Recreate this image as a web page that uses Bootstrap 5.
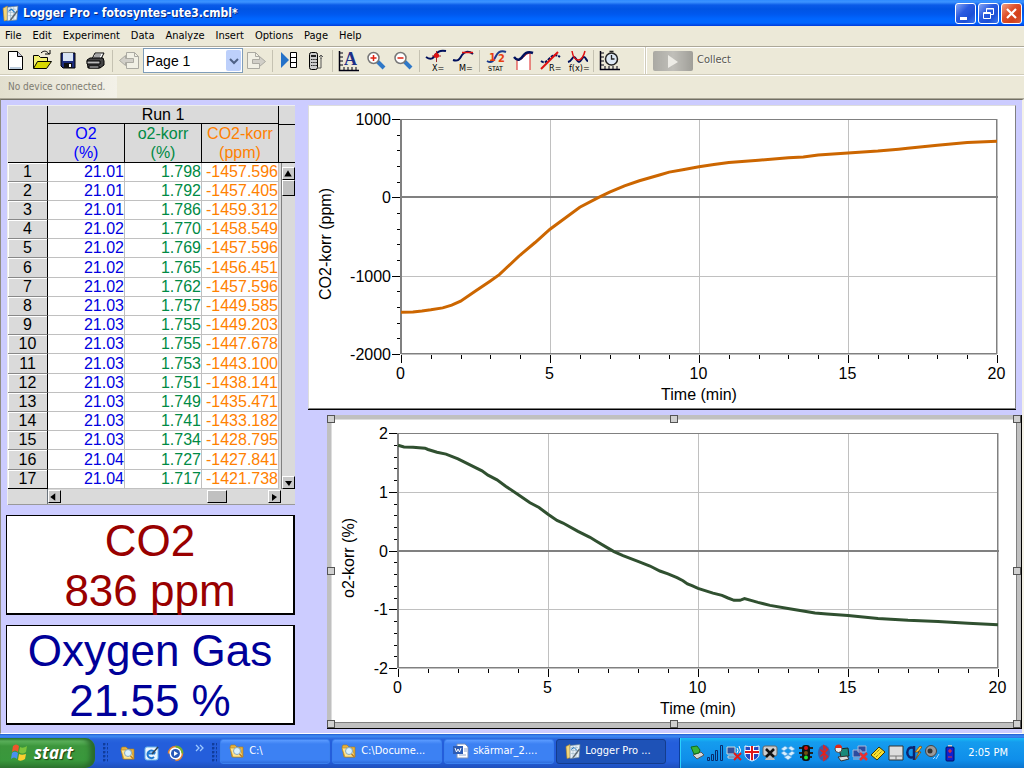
<!DOCTYPE html>
<html lang="en">
<head>
<meta charset="utf-8">
<meta name="viewport" content="width=device-width, initial-scale=1">
<title>Logger Pro - fotosyntes-ute3.cmbl*</title>
<link rel="stylesheet" href="https://cdn.jsdelivr.net/npm/bootstrap@5.3.0/dist/css/bootstrap.min.css">
<style>
  :root { --face: #ece9d8; --ui: "DejaVu Sans Condensed", "DejaVu Sans", sans-serif; --plot: "Liberation Sans", Arial, sans-serif; }
  body { font: 11px/14px var(--ui); color: #000; background: var(--face); }
  svg { display: block; flex: none; }
  button { font-family: inherit; }

  .titlebar { height: 26px; padding: 0 2px 0 2px; color: #fff; text-shadow: 1px 1px #0a2a7c;
    background: linear-gradient(#2f8bff 0, #3c93ff 2px, #0a5be8 5px, #0054e3 9px, #0058ee 14px, #0066ff 19px, #0066ff 23px, #003bda 26px); }
  .titlebar h1 { font: bold 12px/16px var(--ui); }
  .winbtn { width: 21px; height: 21px; border: 1px solid #fff; border-radius: 3px; background: linear-gradient(135deg, #86a6f5, #2a5be0 40%, #1c4fd6 70%, #3a77f0); }
  .winbtn.shut { background: linear-gradient(135deg, #f0a084, #e0512c 40%, #d2401a 70%, #d85c3c); }

  .menubar { height: 20px; gap: 11px; padding: 0 5px; }
  .menubar a { color: #000; text-decoration: none; }
  .toolband { height: 29px; padding-left: 2px; border-top: 1px solid #aca899; border-bottom: 1px solid #d0ccba; box-shadow: inset 0 1px #fff; }
  .tool { width: 27px; height: 27px; }
  .tool.off { opacity: .55; }
  .rule { width: 6px; height: 22px; border: 0; opacity: 1; margin: 0; background: linear-gradient(90deg, transparent 2px, #c5c2b2 2px, #c5c2b2 3px, transparent 3px); }
  .pagebox { position: relative; width: 100px; height: 25px; border: 1px solid #7f9db9; background: #fff; }
  .pagebox select { appearance: none; width: 100%; height: 23px; border: 0; padding: 0 18px 0 2px; background: transparent; font: 14px/22px var(--plot); color: #000; }
  .pagebox svg { position: absolute; right: 1px; top: 1px; pointer-events: none; }
  .toolend { width: 21px; border-right: 1px solid #fff; box-shadow: 1px 0 #d0ccba, 2px 0 #fff; }
  .collect { height: 27px; padding: 0 0 0 8px; gap: 4px; color: #a5a293; text-shadow: 1px 1px #fff; font-size: 11px; }
  .device { height: 24px; border-top: 1px solid #fff; border-bottom: 1px solid #aca899; color: #7d7b70; }
  .device output { width: 117px; padding-left: 8px; background: linear-gradient(90deg, #e2dfce, #f3f1e8); line-height: 22px; font-size: 10px; }

  .workspace { gap: 13px; padding: 5px 0 4px 5px; background: #ccf; border: 1px solid #908e84; border-top-color: #716f64; border-bottom-color: #fff; border-right: 2px solid #f4f2e8; }
  .leftcol { width: 289px; gap: 10px; font-family: var(--plot); }
  .grid { width: 288px; margin-left: 1px; background: #dadada; border-top: 1px solid #eee; border-left: 1px solid #eee; }
  .runs { width: 271px; table-layout: fixed; border-collapse: separate; border-spacing: 0; font-size: 16px; line-height: 18px; color: #000; }
  .runs th { font-weight: 400; text-align: center; padding: 0; border-bottom: 1px solid #000; border-right: 1px solid #000; white-space: nowrap; }
  .runs tr.names th { height: 38px; line-height: 19px; }
  .runs tr.run th { height: 18px; line-height: 17px; }
  .runs tbody tr { height: 19px; }
  .runs tbody tr:nth-child(5n+6) { height: 20px; }
  .runs tbody th { border-bottom: 1px solid #888; box-shadow: inset 1px 1px #fff; background: #dadada; }
  .runs tbody td { background: #fff; border-right: 1px solid #c0c0c0; border-bottom: 1px solid #c0c0c0; text-align: right; padding: 0; }
  .runs tbody tr:last-child th { border-bottom-color: #000; }
  .c-o2 { color: #00f; } .runs tbody td.c-o2 { color: #0000e0; }
  .c-o2k { color: #008a45; }
  .c-co2 { color: #ff8000; }
  .sidehead { height: 19px; border-bottom: 1px solid #000; }
  .sidehead + .sidehead { height: 38px; }
  .arrow { width: 13px; height: 13px; padding: 0; border: 1px solid #000; border-top-color: #fff; border-left-color: #fff; background: #c8c8c8; }
  .thumb { border: 1px solid #000; border-top-color: #fff; border-left-color: #fff; background: #c0c0c0; }
  .vbar { width: 14px; border-left: 1px solid #808080; }
  .hbar { height: 16px; border-bottom: 1px solid #999; }
  .meter { height: 100px; border: 1px solid #000; border-right-width: 2px; border-bottom-width: 2px; background: #fff; font-size: 44px; line-height: 50px; text-align: center; white-space: nowrap; }
  .meter.co2 { color: #900; } .meter.o2 { color: #009; }
  .rightcol { min-width: 0; gap: 5px; }
  .graph { background: #fff; }
  .graph svg { width: 100%; height: auto; font: 16px var(--plot); }
  .graph.plain { margin-right: 6px; border: 1px solid #ddd; border-right-color: #808080; border-bottom-color: #808080; box-shadow: 0 1px #000; }
  .picked { position: relative; margin: 1px 0 0 19px; padding: 4px 4px 5px; background: silver; border-right: 1px solid #000; border-bottom: 1px solid #000; }
  .picked .graph { border: 1px solid #ddd; border-right-color: #808080; border-bottom-color: #808080; }
  .grip { position: absolute; width: 8px; height: 8px; border: 1px solid #555; background: #d0d0d0; }
  .g-mx { left: calc(50% - 4px); } .g-my { top: calc(50% - 5px); }

  .taskbar { height: 34px; padding-top: 4px; color: #fff; background: linear-gradient(#1f5ad0 0, #3f8cf3 2px, #2a66de 5px, #245edb 9px, #245edb 27px, #1e4fbc 34px); }
  .start { width: 97px; border: 0; border-radius: 0 10px 10px 0; padding: 0 0 1px 10px; gap: 5px; color: #fff; font: italic bold 17px/20px "Open Sans", sans-serif; text-shadow: 1px 1px 1px #1c3d10;
    background: linear-gradient(#2c7f2c 0, #5eb45e 3px, #3c963c 8px, #39983c 22px, #2f7a31 30px); box-shadow: inset -5px 0 5px #2a6a2c; }
  .dots { width: 5px; height: 20px; background: radial-gradient(circle at 1px 1px, #103c9c 1px, transparent 2px) 0 0 / 4px 4px; }
  .quick { gap: 7px; padding: 0 4px 0 12px; }
  .tasks { gap: 2px; padding-left: 3px; }
  .task { width: 110px; height: 25px; border: 1px solid #3a80ee; border-radius: 3px; gap: 4px; padding: 0 8px; color: #fff; text-align: left; background: linear-gradient(#5a9bff, #3c81f3 4px, #3c81f3 20px, #2f6cdc); white-space: nowrap; }
  .task.on { background: #1e52b7; border-color: #143c8c; }
  .tray { margin-left: 13px; padding: 0 16px 0 9px; gap: 2px; border-left: 1px solid #0b3f9c; background: linear-gradient(#18bdf5 0, #159cee 4px, #0f8eea 22px, #0c75cf 30px); box-shadow: inset 1px 0 #2bd0fb; }
  .tray time { padding-left: 8px; }
</style>
</head>
<body class="d-flex flex-column min-vh-100">

<svg width="0" height="0" class="position-absolute" aria-hidden="true">
  <defs>
    <symbol id="i-logger" viewBox="0 0 16 16"><path d="M1 3l4-2 1 13-4 1z" fill="#f4d67a" stroke="#b98a20" stroke-width=".6"/><path d="M5 2l10-1-1 13-9 1z" fill="#e8f1f8" stroke="#6a8294" stroke-width=".7"/><path d="M6 4h7M6 7h7M6 10h7M8 2v12M11 2v12" stroke="#9ab6c8" stroke-width=".6"/><path d="M6 6l3-2 3 3" fill="none" stroke="#2277c0"/><path d="M14 5l-6 8-1 2 2-1 6-8z" fill="#5c6870"/></symbol>
    <symbol id="i-folder" viewBox="0 0 16 16"><path d="M1 4l1-2h4l2 2h6v10H3z" fill="#e8b23e" stroke="#a87818" stroke-width=".6"/><path d="M1 5h10l3 9H4z" fill="#ffe58e" stroke="#b98820" stroke-width=".6"/><circle cx="8" cy="8" r="3.500" fill="#d8f2ff" stroke="#8aa8b8"/><path d="M10.500 11l3 3" stroke="#c08020" stroke-width="1.600"/></symbol>
    <symbol id="i-tl" viewBox="0 0 8 8"><path d="M1 4l4-3v6z"/></symbol>
    <symbol id="i-up" viewBox="0 0 8 8"><path d="M4 1l3 5H1z"/></symbol>
  </defs>
</svg>

<header class="titlebar d-flex align-items-center">
  <svg width="17" height="19"><use href="#i-logger"/></svg>
  <h1 class="m-0 ms-1 me-auto">Logger Pro - fotosyntes-ute3.cmbl*</h1>
  <div class="d-flex" style="gap:2px">
    <button class="winbtn p-0" aria-label="Minimize"><svg width="19" height="19"><path d="M4 13h7v3H4z" fill="#fff"/></svg></button>
    <button class="winbtn p-0" aria-label="Restore"><svg width="19" height="19" fill="none" stroke="#fff"><path d="M7.500 8V4.500h7v6H12M7 5h8M4.500 8.500h7v6h-7zM4 9.500h8"/></svg></button>
    <button class="winbtn shut p-0" aria-label="Close"><svg width="19" height="19"><path d="M5 5l9 9M14 5l-9 9" stroke="#fff" stroke-width="2.200"/></svg></button>
  </div>
</header>

<nav class="menubar d-flex align-items-center" aria-label="Menu">
  <a href="#">File</a><a href="#">Edit</a><a href="#">Experiment</a><a href="#">Data</a><a href="#">Analyze</a><a href="#">Insert</a><a href="#">Options</a><a href="#">Page</a><a href="#">Help</a>
</nav>

<div class="toolband d-flex align-items-center" role="toolbar">
  <button class="tool btn p-0 border-0 rounded-0 ms-0" aria-label="New"><svg width="27" height="27"><path d="M6.500 4.500h9l5 5v13h-14z" fill="#fff" stroke="#000"/><path d="M15.500 4.500v5h5" fill="#ccd" stroke="#000"/><path d="M8 21h11" stroke="#bcd" stroke-width="2"/></svg></button>
  <button class="tool btn p-0 border-0 rounded-0" aria-label="Open"><svg width="27" height="27"><path d="M4.500 21V8.500h5l2 2h7v4" fill="#f3f070" stroke="#000"/><path d="M4.500 21.500l4-7h14l-5 7z" fill="#d8d800" stroke="#000"/><path d="M12 6c3-3 6-2 8 1m-4 0h5V3" fill="none" stroke="#000"/></svg></button>
  <button class="tool btn p-0 border-0 rounded-0" aria-label="Save"><svg width="27" height="27"><path d="M5 6h14v15H7l-2-2z" fill="#1c2c7c" stroke="#000"/><path d="M7 6h10v8H7z" fill="#d8e4f4"/><path d="M8 16h8v5H8z" fill="#111"/><path d="M13 17h2v3h-2z" fill="#fff"/></svg></button>
  <button class="tool btn p-0 border-0 rounded-0" aria-label="Print"><svg width="27" height="27" stroke="#000"><path d="M9 12l3-6h9l-3 6z" fill="#fff"/><path d="M12 8h6M11 10h6" stroke-width=".7"/><path d="M4 13l3-2h13l1 3v4l-4 3H5z" fill="#444"/><path d="M4 14h13v3H4z" fill="#bbb"/><path d="M6 19h10v2H6z" fill="#eee"/></svg></button>
  <hr class="rule">
  <button class="tool off btn p-0 border-0 rounded-0" aria-label="Previous page"><svg width="27" height="27" stroke="#777"><path d="M10.500 5.500h8l4 4v12h-12z" fill="#f6f6f0"/><path d="M18.500 5.500v4h4" fill="none"/><path d="M3.500 13.500l6-5v3h8v4h-8v3z" fill="#bbb"/></svg></button>
  <label class="pagebox"><select aria-label="Page"><option>Page 1</option></select>
    <svg width="15" height="21"><rect width="15" height="21" rx="2" fill="#bdd0fb"/><path d="M4 9l4 4 4-4" fill="none" stroke="#4d6185" stroke-width="2"/></svg></label>
  <button class="tool off btn p-0 border-0 rounded-0" aria-label="Next page"><svg width="27" height="27" stroke="#777"><path d="M4.500 5.500h8l4 4v12h-12z" fill="#f6f6f0"/><path d="M12.500 5.500v4h4" fill="none"/><path d="M22.500 14.500l-6-5v3h-7v4h7v3z" fill="#bbb"/></svg></button>
  <hr class="rule">
  <button class="tool btn p-0 border-0 rounded-0" aria-label="Data browser"><svg width="27" height="27"><path d="M5 5l8 8-8 8z" fill="#2472c8"/><path d="M14.500 5.500h6v15h-6zM14.500 10.500h6M14.500 15.500h6" fill="#fff" stroke="#000"/></svg></button>
  <button class="tool btn p-0 border-0 rounded-0" aria-label="LabPro"><svg width="27" height="27"><rect x="6.500" y="5.500" width="8" height="17" rx="2" fill="#ccc" stroke="#000"/><path d="M8 8h5v2H8z" fill="#222"/><path d="M8 12.500h6M8 15.500h6M8 18.500h6" stroke="#222" stroke-dasharray="1.500 .7"/><path d="M15 21h3V11m0 1v-4m-2 2l2-2 2 2" fill="none" stroke="#555"/></svg></button>
  <hr class="rule">
  <button class="tool btn p-0 border-0 rounded-0" aria-label="Autoscale"><svg width="27" height="27"><path d="M3.500 4v19.500H23" fill="none" stroke="#001" stroke-width="1.500"/><path d="M4 6h3M4 10h3M4 14h3M4 18h3M8 23v-3M12 23v-3M16 23v-3M20 23v-3" stroke="#001"/><text x="8" y="18" font-family="Liberation Serif, serif" font-weight="700" font-size="18" fill="#1c2f86">A</text></svg></button>
  <button class="tool btn p-0 border-0 rounded-0" aria-label="Zoom in"><svg width="27" height="27"><path d="M14 14l7 7" stroke="#2f78c8" stroke-width="4"/><circle cx="10.500" cy="11" r="5.500" fill="#fff" stroke="#777" stroke-width="1.500"/><path d="M7.500 11h6M10.500 8v6" stroke="#e02010" stroke-width="1.500"/></svg></button>
  <button class="tool btn p-0 border-0 rounded-0" aria-label="Zoom out"><svg width="27" height="27"><path d="M14 14l7 7" stroke="#2f78c8" stroke-width="4"/><circle cx="10.500" cy="11" r="5.500" fill="#fff" stroke="#777" stroke-width="1.500"/><path d="M7.500 11h6" stroke="#e02010" stroke-width="1.500"/></svg></button>
  <hr class="rule">
  <button class="tool btn p-0 border-0 rounded-0" aria-label="Examine"><svg width="27" height="27" fill="none"><path d="M3 10c6 4 8 0 10-3s5-4 10-3" stroke="#00105c" stroke-width="2"/><path d="M13.500 4v11M9 9h9" stroke="#a02828"/><circle cx="13.500" cy="8.500" r="2.500" fill="#e01010"/><text x="9" y="24" font-size="9" fill="#000">X=</text></svg></button>
  <button class="tool btn p-0 border-0 rounded-0" aria-label="Tangent"><svg width="27" height="27" fill="none"><path d="M3 13c6 2 7-2 9-5s6-5 11-1" stroke="#00105c" stroke-width="2"/><path d="M12 5.500h11" stroke="#e01010" stroke-width="1.500"/><text x="9" y="24" font-size="9" fill="#000">M=</text></svg></button>
  <hr class="rule">
  <button class="tool btn p-0 border-0 rounded-0" aria-label="Statistics"><svg width="27" height="27" fill="none"><path d="M4 14c5 3 7-1 9-5s5-6 10-4" stroke="#1c3c8c" stroke-width="2"/><text x="6" y="14" font-size="11" font-weight="700" fill="#e84010">1</text><text x="15" y="15" font-size="11" font-weight="700" fill="#e84010">2</text><text x="5" y="24" font-size="7" fill="#000">STAT</text></svg></button>
  <button class="tool btn p-0 border-0 rounded-0" aria-label="Integral"><svg width="27" height="27" fill="none"><path d="M7 23V13c6 1 7-6 13-7v17" fill="#fff" stroke="#e02020"/><path d="M4 10c4 5 7 2 9-1s5-5 10-3" stroke="#00105c" stroke-width="2.500"/></svg></button>
  <button class="tool btn p-0 border-0 rounded-0" aria-label="Linear fit"><svg width="27" height="27" fill="none"><path d="M4 14c4 3 6 0 9-3s6-4 10-1" stroke="#00105c" stroke-width="2" stroke-dasharray="3 1"/><path d="M4 22L21 5" stroke="#e01010" stroke-width="2"/><text x="12" y="24" font-size="9" fill="#000">R=</text></svg></button>
  <button class="tool btn p-0 border-0 rounded-0" aria-label="Curve fit"><svg width="27" height="27" fill="none"><path d="M4 15c4-1 4-5 6-5s3 5 5 5 3-5 5-5 2 4 4 4" stroke="#00105c" stroke-width="2"/><path d="M8 4c2 12 10 12 13 0" stroke="#e01010" stroke-width="1.500"/><text x="5" y="24" font-size="9" fill="#000">f(x)=</text></svg></button>
  <hr class="rule">
  <button class="tool btn p-0 border-0 rounded-0" aria-label="Data collection"><svg width="27" height="27"><path d="M3.500 4v18.500H23" fill="none" stroke="#001" stroke-width="1.500"/><path d="M4 6h3M4 10h3M4 14h3M4 18h3M8 22v-3M12 22v-3M16 22v-3M20 22v-3" stroke="#001"/><circle cx="14.500" cy="12" r="6" fill="#dde8f4" stroke="#222" stroke-width="1.500"/><path d="M14.500 8v4h3M12.500 4.500h4" fill="none" stroke="#222" stroke-width="1.300"/></svg></button>
  <span class="toolend align-self-stretch"></span>
  <button class="collect btn border-0 rounded-0 d-flex align-items-center" disabled><svg width="40" height="20"><defs><linearGradient id="cg" x2="1"><stop stop-color="#888"/><stop offset=".5" stop-color="#aaa"/><stop offset="1" stop-color="#777"/></linearGradient></defs><rect width="40" height="20" rx="2" fill="url(#cg)"/><path d="M15 4l10 7-10 6z" fill="#eee"/></svg>Collect</button>
</div>
<div class="device d-flex"><output>No device connected.</output></div>

<main class="workspace d-flex flex-grow-1">
  <section class="leftcol d-flex flex-column flex-shrink-0">
    <div class="grid">
      <div class="d-flex">
        <table class="runs">
          <colgroup><col style="width:40px"><col style="width:77px"><col style="width:77px"><col style="width:77px"></colgroup>
          <thead>
            <tr class="run"><th rowspan="2"></th><th colspan="3">Run 1</th></tr>
            <tr class="names"><th class="c-o2">O2<br>(%)</th><th class="c-o2k">o2-korr<br>(%)</th><th class="c-co2">CO2-korr<br>(ppm)</th></tr>
          </thead>
          <tbody>
            <tr><th>1</th><td class="c-o2">21.01</td><td class="c-o2k">1.798</td><td class="c-co2">-1457.596</td></tr>
            <tr><th>2</th><td class="c-o2">21.01</td><td class="c-o2k">1.792</td><td class="c-co2">-1457.405</td></tr>
            <tr><th>3</th><td class="c-o2">21.01</td><td class="c-o2k">1.786</td><td class="c-co2">-1459.312</td></tr>
            <tr><th>4</th><td class="c-o2">21.02</td><td class="c-o2k">1.770</td><td class="c-co2">-1458.549</td></tr>
            <tr><th>5</th><td class="c-o2">21.02</td><td class="c-o2k">1.769</td><td class="c-co2">-1457.596</td></tr>
            <tr><th>6</th><td class="c-o2">21.02</td><td class="c-o2k">1.765</td><td class="c-co2">-1456.451</td></tr>
            <tr><th>7</th><td class="c-o2">21.02</td><td class="c-o2k">1.762</td><td class="c-co2">-1457.596</td></tr>
            <tr><th>8</th><td class="c-o2">21.03</td><td class="c-o2k">1.757</td><td class="c-co2">-1449.585</td></tr>
            <tr><th>9</th><td class="c-o2">21.03</td><td class="c-o2k">1.755</td><td class="c-co2">-1449.203</td></tr>
            <tr><th>10</th><td class="c-o2">21.03</td><td class="c-o2k">1.755</td><td class="c-co2">-1447.678</td></tr>
            <tr><th>11</th><td class="c-o2">21.03</td><td class="c-o2k">1.753</td><td class="c-co2">-1443.100</td></tr>
            <tr><th>12</th><td class="c-o2">21.03</td><td class="c-o2k">1.751</td><td class="c-co2">-1438.141</td></tr>
            <tr><th>13</th><td class="c-o2">21.03</td><td class="c-o2k">1.749</td><td class="c-co2">-1435.471</td></tr>
            <tr><th>14</th><td class="c-o2">21.03</td><td class="c-o2k">1.741</td><td class="c-co2">-1433.182</td></tr>
            <tr><th>15</th><td class="c-o2">21.03</td><td class="c-o2k">1.734</td><td class="c-co2">-1428.795</td></tr>
            <tr><th>16</th><td class="c-o2">21.04</td><td class="c-o2k">1.727</td><td class="c-co2">-1427.841</td></tr>
            <tr><th>17</th><td class="c-o2">21.04</td><td class="c-o2k">1.717</td><td class="c-co2">-1421.738</td></tr>
          </tbody>
        </table>
        <div class="flex-grow-1 d-flex flex-column">
          <div class="sidehead"></div><div class="sidehead"></div>
          <div class="vbar flex-grow-1 d-flex flex-column align-self-end">
            <button class="arrow mt-1" aria-label="Scroll up"><svg width="10" height="10"><use href="#i-up"/></svg></button>
            <span class="thumb" style="height:16px"></span>
            <button class="arrow mt-auto" aria-label="Scroll down"><svg width="10" height="10"><path d="M2 3h7l-3 5z"/></svg></button>
          </div>
        </div>
      </div>
      <div class="hbar d-flex align-items-center">
        <span class="h-100 border-end border-secondary flex-shrink-0" style="width:40px"></span>
        <button class="arrow" aria-label="Scroll left"><svg width="10" height="10"><use href="#i-tl"/></svg></button>
        <span class="thumb ms-auto" style="width:20px;height:13px"></span>
        <button class="arrow" style="margin-left:41px;margin-right:14px" aria-label="Scroll right"><svg width="10" height="10"><path d="M3 2v7l5-4z"/></svg></button>
      </div>
    </div>
    <div class="meter co2">CO2<br>836 ppm</div>
    <div class="meter o2">Oxygen Gas<br>21.55 %</div>
  </section>

  <section class="rightcol flex-grow-1 d-flex flex-column">
    <div class="graph plain" id="co2"></div>
    <div class="picked">
      <div class="graph" id="o2"></div>
      <i class="grip top-0 start-0"></i><i class="grip top-0 g-mx"></i><i class="grip top-0 end-0"></i>
      <i class="grip start-0 g-my"></i><i class="grip end-0 g-my"></i>
      <i class="grip bottom-0 start-0"></i><i class="grip bottom-0 g-mx"></i><i class="grip bottom-0 end-0"></i>
    </div>
  </section>
</main>

<footer class="taskbar d-flex">
  <button class="start d-flex align-items-center"><svg width="19" height="19" viewBox="0 0 19 19"><path d="M3 3c2-2 4-2 6 0L8 9C6 7 4 7 2 9z" fill="#f0562c"/><path d="M10 4c2 1 4 1 7-1l-1 6c-3 2-5 2-7 0z" fill="#7cc43c"/><path d="M2 10c2-2 4-1 6 0l-1 6c-2-2-4-2-6 0z" fill="#4a90f0"/><path d="M9 11c2 1 4 1 7 0l-1 5c-3 2-5 2-7 1z" fill="#fbcf30"/></svg>start</button>
  <span class="dots align-self-center ms-2"></span>
  <div class="quick d-flex align-items-center">
    <svg width="16" height="16"><use href="#i-folder"/></svg>
    <svg width="17" height="17" viewBox="0 0 17 17"><rect x="2" y="2" width="13" height="13" rx="2" fill="#eaf6ff" stroke="#68b4e8"/><path d="M12 8.500A3.800 3.800 0 1 0 11 12M5 8.500h7" fill="none" stroke="#1c78d0" stroke-width="2"/><path d="M9 9l6-7" stroke="#345" stroke-width="1.500"/></svg>
    <svg width="17" height="17" viewBox="0 0 17 17"><circle cx="8.500" cy="8.500" r="7" fill="#fff" stroke="#e08030" stroke-width="1.500"/><path d="M8.500 1.500a7 7 0 0 1 7 7" fill="none" stroke="#70b030" stroke-width="2"/><path d="M1.500 8.500a7 7 0 0 0 7 7" fill="none" stroke="#3060d0" stroke-width="2"/><circle cx="8.500" cy="8.500" r="4.500" fill="#2858b8"/><path d="M7 6l4 2.500L7 11z" fill="#fff"/></svg>
    <svg width="17" height="24" fill="none" stroke="#9cc8ff" stroke-width="1.300"><path d="M5 4l3 3-3 3M9 4l3 3-3 3"/></svg>
  </div>
  <span class="dots align-self-center"></span>
  <div class="tasks d-flex align-items-center pb-1">
    <button class="task d-flex align-items-center"><svg width="16" height="16"><use href="#i-folder"/></svg>C:\</button>
    <button class="task d-flex align-items-center"><svg width="16" height="16"><use href="#i-folder"/></svg>C:\Docume...</button>
    <button class="task d-flex align-items-center"><svg width="16" height="16" viewBox="0 0 16 16"><path d="M4 1h8l3 3v11H4z" fill="#fff" stroke="#7a90b8"/><path d="M11 6h3M11 8h3M6 12h7" stroke="#90a8d0"/><rect y="3" width="10" height="8" fill="#2c5cb4"/><path d="M2 5l1.500 4L5 6l1.500 3L8 5" fill="none" stroke="#fff"/></svg>skärmar_2....</button>
    <button class="task on d-flex align-items-center"><svg width="16" height="17"><use href="#i-logger"/></svg>Logger Pro ...</button>
  </div>
  <div class="tray d-flex align-items-center flex-grow-1">
    <svg width="16" height="18" viewBox="0 0 16 18"><path d="M4 11l8-3 3 3-7 4z" fill="#d8d8d8" stroke="#555"/><path d="M2 3l6-1 3 4-1 3-5 1z" fill="#38b438" stroke="#146c1c"/></svg>
    <svg width="17" height="18" viewBox="0 0 17 18" fill="none" stroke="#082c6c"><path d="M.5 13.500h2v3h-2zM4.500 10.500h2v6h-2zM8.500 6.500h2v10h-2zM13.500 1.500h2v15h-2z"/></svg>
    <svg width="16" height="18" viewBox="0 0 16 18"><path d="M1 3h8v7H1zM2 12h9v2H2z" fill="#345098" stroke="#cdd"/><path d="M11 4q2 2 0 5M13 2q3 4 0 9" fill="none" stroke="#fff"/><path d="M8 9l7 7M15 9l-7 7" stroke="#e01818" stroke-width="2"/></svg>
    <svg width="16" height="18" viewBox="0 0 16 18"><path d="M1 2c5 1 9 1 14 0v8c0 4-4 6-7 7-3-1-7-3-7-7z" fill="#2448c0" stroke="#fff"/><path d="M8 2v14M1 8h14" stroke="#fff" stroke-width="4"/><path d="M8 2v14M1 8h14" stroke="#e01818" stroke-width="2"/></svg>
    <svg width="16" height="18" viewBox="0 0 16 18"><rect x="1" y="2" width="14" height="10" rx="2" fill="#ccc" stroke="#666"/><path d="M5 12h6l2 4H3z" fill="#bbb"/><path d="M4 5l8 8M12 5l-8 8" stroke="#111" stroke-width="2.500"/></svg>
    <svg width="16" height="18" viewBox="0 0 16 18" fill="#d6efff" stroke="#4698dc" stroke-width=".6"><path d="M5 2l3 2-4 3-3-2zM11 2l-3 2 4 3 3-2zM4 7l4 3-3 2-4-3zM12 7l-4 3 3 2 4-3zM8 11l4 2-4 3-4-3z"/></svg>
    <svg width="16" height="18" viewBox="0 0 16 18"><path d="M1 4h14M1 9h14M2 13h12" stroke="#222" stroke-width="2"/><rect x="4" y="1" width="8" height="16" rx="3" fill="#111"/><circle cx="8" cy="4" r="2" fill="#d01010"/><circle cx="8" cy="9" r="2" fill="#705010"/><circle cx="8" cy="13.500" r="2" fill="#20e830"/></svg>
    <svg width="16" height="18" viewBox="0 0 16 18"><ellipse cx="8" cy="9" rx="6" ry="8" fill="#3c5ca8"/><path d="M4.500 5.500l7 7L8 16V2l3.500 3.500-7 7" fill="none" stroke="#e82018" stroke-width="1.500"/></svg>
    <svg width="16" height="18" viewBox="0 0 16 18"><path d="M5 5l9-1 1 8-8 1z" fill="#188878" stroke="#222"/><path d="M4 13l9-1 2 3-8 2z" fill="#ddd" stroke="#333"/><circle cx="4.500" cy="5" r="3.500" fill="#eee" stroke="#444"/><path d="M1 4a3.500 3.500 0 0 1 7 0z" fill="#e02818"/></svg>
    <svg width="16" height="18" viewBox="0 0 16 18"><path d="M6 2h8v6H6zM1 6h8v7H1zM1 15h9" fill="#2c4ca0" stroke="#aab8d8"/><path d="M8 9l7 7M15 9l-7 7" stroke="#e83030" stroke-width="2.500"/></svg>
    <svg width="16" height="18" viewBox="0 0 16 18"><path d="M1 11l8-8 6 5-8 8z" fill="#f8e030" stroke="#3c3400"/><path d="M4 11l6-6M6 13l6-6" stroke="#705c00" stroke-dasharray="1 1"/></svg>
    <svg width="16" height="18" viewBox="0 0 16 18"><path d="M1 2h14v14H1z" fill="#ddd" stroke="#333"/><path d="M2 12h12M8 12v4" stroke="#777"/></svg>
    <svg width="16" height="18" viewBox="0 0 16 18"><path d="M7 4a4 5 0 1 0 0 9M8 2v14" fill="none" stroke="#0c2470" stroke-width="2.500"/><path d="M14 2L9 8h4l-4 8 6-8h-3l4-5z" fill="#ffc838" stroke="#7c3c00" stroke-width=".7"/></svg>
    <svg width="16" height="18" viewBox="0 0 16 18"><circle cx="7" cy="7" r="5.500" fill="#9a9a9a" stroke="#444"/><circle cx="6" cy="7" r="2.500" fill="#333"/><path d="M12 15l3-5M9 15l2-2" stroke="#a8d8ff"/></svg>
    <svg width="16" height="18" viewBox="0 0 16 18"><path d="M6 1h4v2H6z" fill="#ccc"/><rect x="4" y="3" width="8" height="14" rx="1" fill="#1020d0" stroke="#001060"/><path d="M8 5v4M6 7h4M6 13h4" stroke="#f03030" stroke-width="1.200"/></svg>
    <time class="text-nowrap">2:05 PM</time>
  </div>
</footer>

<script src="https://cdn.jsdelivr.net/npm/bootstrap@5.3.0/dist/js/bootstrap.bundle.min.js"></script>
<script>
  // Draws one time graph: frame, grid, ticks, labels and the measured curve.
  function drawGraph(id, g) {
    const top = g.top, bottom = 248, x = t => g.left + (g.right - g.left) * t / 20;
    const y = v => top + (bottom - top) * (g.max - v) / (g.max - g.min);
    const r = n => Math.round(n) + 0.5;
    const line = (x1, y1, x2, y2, c, w = 1) => `<path d="M${x1} ${y1}L${x2} ${y2}" stroke="${c}" stroke-width="${w}"/>`;
    let s = '<g shape-rendering="crispEdges">', labels = '';
    for (let t = 0; t <= 20; t++) {
      const major = t % 5 === 0, px = r(x(t));
      if (major) {
        if (t) s += line(px, top, px, bottom, '#c0c0c0');
        labels += `<text x="${px - 1}" y="273" text-anchor="middle">${t}</text>`;
      }
      s += line(px, bottom + 1, px, bottom + (major ? 9 : 5), '#000');
    }
    const n = Math.round((g.max - g.min) / g.step * 5);
    for (let i = 0; i <= n; i++) {
      const v = g.min + i * g.step / 5, major = i % 5 === 0, py = r(y(v));
      s += line(g.left - (major ? 9 : 4), py, g.left - 1, py, '#000');
      if (major) {
        s += line(g.left, py, g.right, py, '#c0c0c0');
        labels += `<text x="${g.left - 10}" y="${py + 5}" text-anchor="end">${Math.round(v)}</text>`;
      }
    }
    s += line(g.left, r(top), g.right, r(top), '#808080') + line(g.left, bottom - .5, g.right, bottom - .5, '#808080');
    s += line(g.right - .5, top, g.right - .5, bottom, '#808080');
    s += line(g.left, Math.round(y(0)), g.right + 1, Math.round(y(0)), '#808080', 2) + line(g.left, top, g.left, bottom, '#808080', 2) + '</g>';
    const pts = g.data.map(([t, v]) => x(t).toFixed(1) + ',' + (y(v) + .5).toFixed(1)).join(' ');
    s += `<polyline points="${pts}" fill="none" stroke="${g.color}" stroke-width="3"/>${labels}`;
    s += `<text x="${x(10)}" y="294" text-anchor="middle">Time (min)</text>`;
    s += `<text transform="translate(22 138) rotate(-90)" text-anchor="middle">${g.name}</text>`;
    document.getElementById(id).innerHTML = `<svg viewBox="0 0 ${g.width} 302" role="img" aria-label="${g.name}">${s}</svg>`;
  }
  drawGraph('co2', { width: 706, left: 92, right: 688, top: 13, min: -2000, max: 1000, step: 1000, color: '#cc6600', name: 'CO2-korr (ppm)',
    data: [[0,-1460],[.4,-1458],[.7,-1445],[1,-1430],[1.4,-1405],[1.7,-1370],[2,-1320],[2.5,-1190],[3,-1060],[3.3,-980],[4,-730],[4.5,-570],[5,-400],[5.5,-260],[6,-119],[6.6,0],[7,72],[7.5,153],[8,217],[8.7,295],[9,328],[9.5,362],[10,396],[10.5,425],[11,451],[12,481],[13,511],[13.5,523],[14,545],[15,571],[16,596],[16.7,621],[17,634],[17.5,651],[18,672],[19,706],[20,723]] });
  drawGraph('o2', { width: 684, left: 66, right: 666, top: 13, min: -2, max: 2, step: 1, color: '#305030', name: 'o2-korr (%)',
    data: [[0,1.8],[.2,1.77],[.5,1.765],[.9,1.75],[1,1.727],[1.3,1.68],[1.6,1.65],[2,1.568],[2.5,1.44],[2.8,1.364],[3,1.29],[3.3,1.21],[3.6,1.1],[4,.96],[4.4,.82],[4.7,.74],[5,.625],[5.3,.52],[5.5,.477],[6,.335],[6.4,.233],[6.6,.17],[7,.05],[7.2,-.01],[7.5,-.08],[8,-.176],[8.4,-.255],[8.73,-.34],[9,-.39],[9.3,-.455],[9.5,-.506],[9.65,-.56],[9.8,-.59],[10,-.636],[10.5,-.716],[10.8,-.756],[11,-.8],[11.2,-.84],[11.4,-.84],[11.55,-.81],[12,-.875],[12.4,-.926],[13,-.977],[13.9,-1.057],[14.3,-1.07],[15,-1.1],[16,-1.148],[17,-1.18],[18,-1.2],[19,-1.23],[20,-1.255]] });
</script>
</body>
</html>
